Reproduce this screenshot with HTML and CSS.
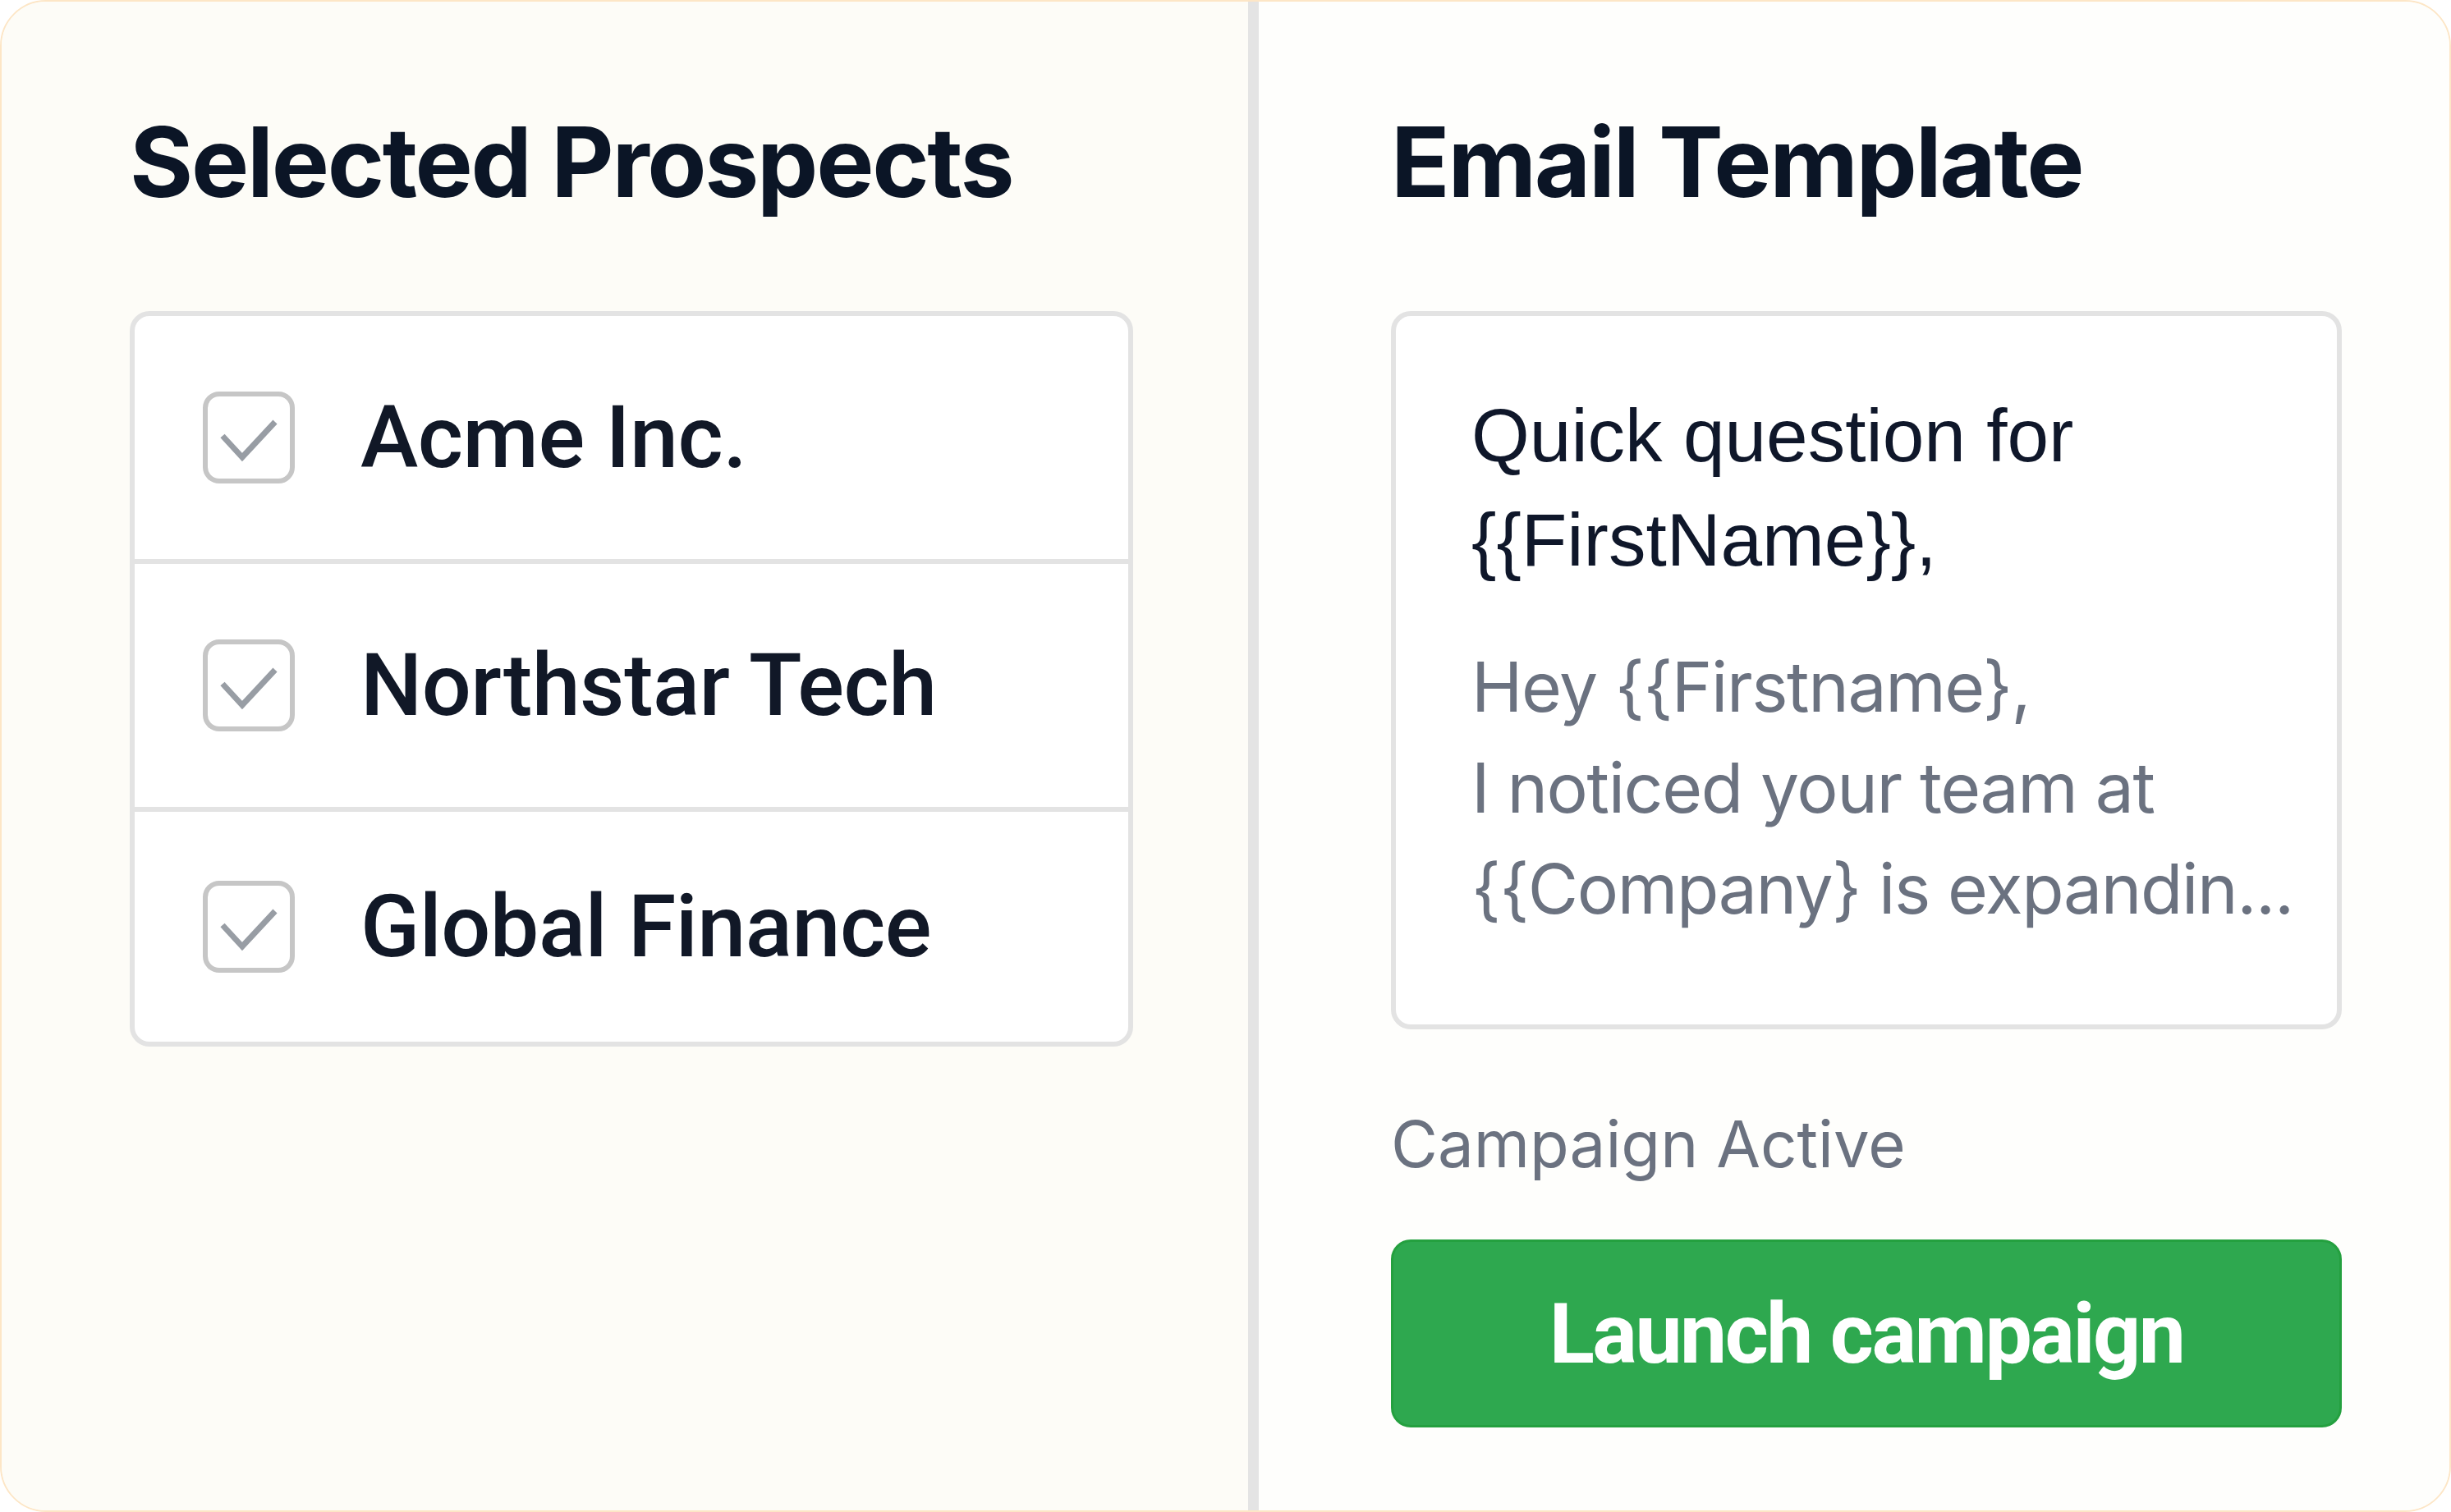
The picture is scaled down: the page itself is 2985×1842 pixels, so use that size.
FILE: index.html
```html
<!DOCTYPE html>
<html lang="en">
<head>
<meta charset="utf-8">
<title>Campaign</title>
<link rel="stylesheet" href="styles.css">
</head>
<body>
<div class="frame">
  <section class="panel panel-left">
    <h1 class="title">Selected Prospects</h1>
    <div class="list">
      <div class="row">
        <span class="check"><svg viewBox="0 0 100 100"><path d="M18 48 L42 74 L82 31"/></svg></span>
        <span class="name">Acme Inc.</span>
      </div>
      <div class="row">
        <span class="check"><svg viewBox="0 0 100 100"><path d="M18 48 L42 74 L82 31"/></svg></span>
        <span class="name">Northstar Tech</span>
      </div>
      <div class="row row-last">
        <span class="check"><svg viewBox="0 0 100 100"><path d="M18 48 L42 74 L82 31"/></svg></span>
        <span class="name">Global Finance</span>
      </div>
    </div>
  </section>
  <div class="divider"></div>
  <section class="panel panel-right">
    <h1 class="title">Email Template</h1>
    <div class="template">
      <p class="subject">Quick question for<br>{{FirstName}},</p>
      <p class="body">Hey {{Firstname},<br>I noticed your team at<br>{{Company} is expandin...</p>
    </div>
    <p class="status">Campaign Active</p>
    <button class="launch">Launch campaign</button>
  </section>
</div>
</body>
</html>
```

FILE: styles.css
```css
html, body {
  margin: 0;
  padding: 0;
  background: #ffffff;
}

.frame {
  width: 2985px;
  height: 1842px;
  box-sizing: border-box;
  display: flex;
  border: 2px solid #fde6c6;
  border-radius: 56px;
  overflow: hidden;
  background: #fdfcf7;
}

.panel {
  box-sizing: border-box;
  padding-top: 123px;
}

.panel-left {
  width: 1518px;
  padding-left: 156px;
  background: #fdfcf7;
}

.divider {
  width: 13px;
  background: #e4e4e4;
  flex: none;
}

.panel-right {
  flex: 1;
  padding-left: 161px;
  padding-right: 131px;
  background: #fefefc;
}

.title {
  margin: 0;
  font-family: Inter, "Liberation Sans", sans-serif;
  font-weight: 700;
  font-size: 118px;
  line-height: 144px;
  color: #0b1526;
  letter-spacing: -2.3px;
}

.list {
  margin-top: 110px;
  width: 1222px;
  box-sizing: border-box;
  border: 6px solid #e3e3e3;
  border-radius: 24px;
  background: #ffffff;
  overflow: hidden;
}

.row {
  height: 296px;
  display: flex;
  align-items: center;
  gap: 80px;
  padding-left: 83px;
  border-bottom: 6px solid #e3e3e3;
}

.row-last {
  height: 280px;
  border-bottom: none;
}

.check {
  width: 112px;
  height: 112px;
  box-sizing: border-box;
  border: 6px solid #c6c6c6;
  border-radius: 20px;
  display: flex;
  flex: none;
}

.check svg {
  width: 100px;
  height: 100px;
}

.check path {
  fill: none;
  stroke: #989da4;
  stroke-width: 7;
}

.name {
  font-family: Roboto, "Liberation Sans", sans-serif;
  font-weight: 500;
  font-size: 106px;
  color: #111827;
  letter-spacing: -0.5px;
}

.template {
  margin-top: 110px;
  box-sizing: border-box;
  border: 6px solid #e3e3e3;
  border-radius: 24px;
  background: #ffffff;
  padding: 82px 30px 104px 92px;
}

.subject {
  margin: 0;
  font-family: "Liberation Sans", Arial, sans-serif;
  font-size: 91px;
  line-height: 127px;
  color: #0f172a;
}

.body {
  margin: 54px 0 0;
  font-family: Inter, "Liberation Sans", sans-serif;
  font-size: 84px;
  line-height: 123px;
  letter-spacing: -1.4px;
  white-space: nowrap;
  color: #6b7280;
}

.status {
  margin: 92px 0 0;
  font-family: Inter, "Liberation Sans", sans-serif;
  font-size: 78px;
  line-height: 96px;
  color: #6b7280;
}

.launch {
  display: block;
  margin-top: 68px;
  width: 100%;
  height: 229px;
  box-sizing: border-box;
  border: 3px solid #24a03f;
  border-radius: 24px;
  background: #2ea84f;
  color: #ffffff;
  font-family: Roboto, "Liberation Sans", sans-serif;
  font-weight: 700;
  font-size: 102px;
  letter-spacing: -2.5px;
  cursor: pointer;
}
```
